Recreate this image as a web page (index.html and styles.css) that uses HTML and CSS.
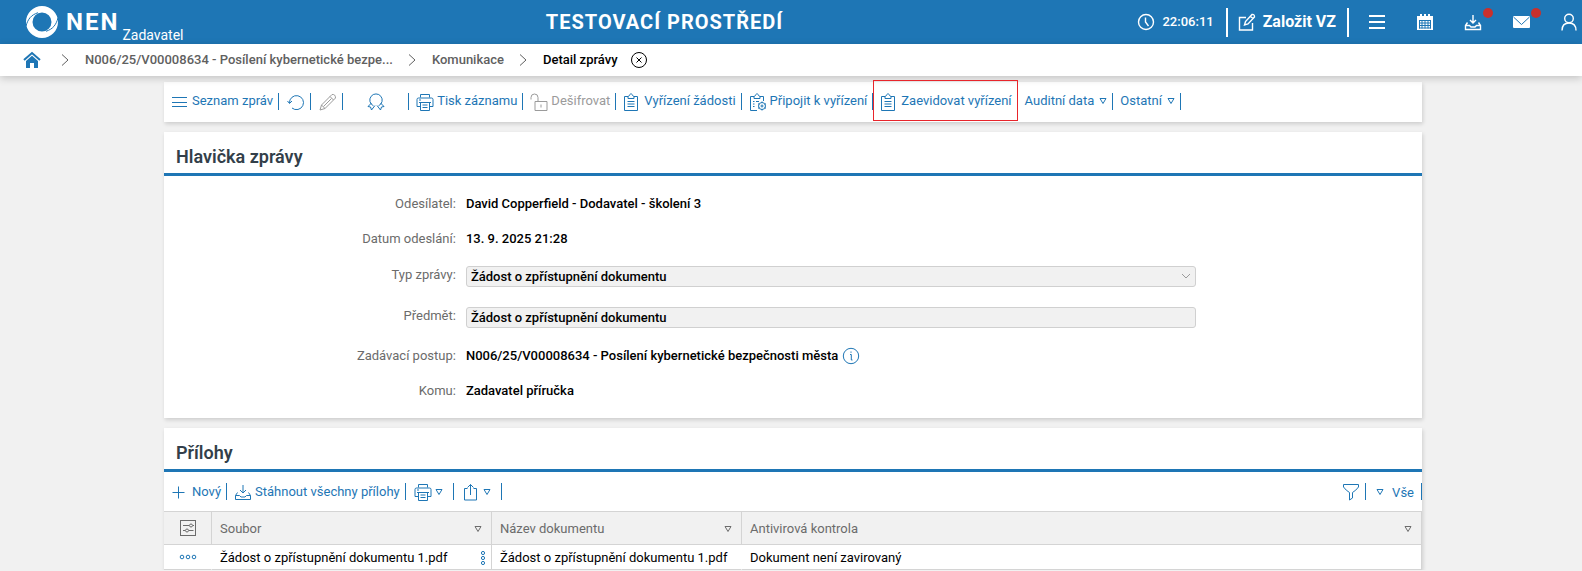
FILE: index.html
```html
<!DOCTYPE html>
<html lang="cs">
<head>
<meta charset="utf-8">
<title>NEN – Detail zprávy</title>
<link rel="stylesheet" href="styles.css">
</head>
<body>
<svg class="sprite" aria-hidden="true">
  <symbol id="clip" viewBox="0 0 18 18"><path d="M5 3.500H1.500V17.500H14.500V3.500H11M5 5.500V3.500L6.500 2.500C7 .2 9 .2 9.500 2.500L11 3.500V5.500ZM4.500 8.500H11.500M4.500 11H11.500M4.500 13.500H11.500"/></symbol>
  <symbol id="printer" viewBox="0 0 18 18"><path d="M4.500 4.500V1.500H13.500V4.500M4.500 13.500H1V6.500Q1 5 2.500 5H15.500Q17 5 17 6.500V13.500H13.500M4.500 9.500H13.500V17.500H4.500ZM3 9.500H15M6.500 12H11.500M6.500 14.500H11.500M3 7H5"/></symbol>
  <symbol id="tray" viewBox="0 0 18 18"><path d="M9 2V10M6 7L9 10L12 7M3.500 9.500L1.500 12.500V16.500H16.500V12.500L14.500 9.500M1.500 12.500H5.500L7 14H11L12.500 12.500H16.500"/></symbol>
  <symbol id="tri" viewBox="0 0 8 8"><path d="M1 1.500H7L4 6.500Z"/></symbol>
  <symbol id="chev" viewBox="0 0 8 14"><path d="M1 1.500L7 7L1 12.500"/></symbol>
</svg>

<header class="topbar">
  <a class="brand" href="#">
    <svg class="brand-mark" viewBox="0 0 32 32"><path fill-rule="evenodd" d="M16 0a16 16 0 1 0 0 32a16 16 0 1 0 0-32ZM16 6.500a9.500 9.500 0 1 1 0 19a9.500 9.500 0 1 1 0-19Z"/><path class="cut" d="M0 20C2 13 5 9 12 6.700M32 12C30 19 27 23 20 25.300"/></svg>
    <span class="brand-name">NEN</span>
    <span class="brand-role">Zadavatel</span>
  </a>
  <div class="env">TESTOVACÍ PROSTŘEDÍ</div>
  <div class="clock">
    <svg class="icon" viewBox="0 0 18 18"><circle cx="9" cy="9" r="7.500"/><path d="M8.500 4.500V9L11.500 13"/></svg>
    <time>22:06:11</time>
  </div>
  <button class="create" type="button">
    <svg class="icon" viewBox="0 0 18 18"><path d="M8 4.500H1.500V17H14.500V10M6.500 12L7.500 8.500L14 1.500Q16.500 1 16.500 4L10 11ZM12.500 3.500L15 5.500"/></svg>
    Založit VZ
  </button>
  <nav class="tools">
    <button type="button" aria-label="Menu"><svg class="icon burger" viewBox="0 0 18 18"><path d="M1 3H17M1 9H17M1 15H17"/></svg></button>
    <button type="button" aria-label="Kalendář"><svg class="icon" viewBox="0 0 18 18"><path class="solid" d="M1 3H4V1H6V3H8V1H10V3H12V1H14V3H17V17H1Z"/><path class="cut" d="M3 7.500H15M3 10H15M3 12.500H15M3 15H15M3.500 7V15.500M6 7V15.500M9 7V15.500M12 7V15.500M14.500 7V15.500"/></svg></button>
    <button type="button" aria-label="Stažené"><svg class="icon"><use href="#tray"/></svg><span class="dot"></span></button>
    <button type="button" aria-label="Zprávy"><svg class="icon" viewBox="0 0 18 18"><rect class="solid" x="1" y="3" width="17" height="12" rx="1"/><path class="cut" d="M1.500 4L9.500 11.500L17.500 4"/></svg><span class="dot"></span></button>
    <button type="button" aria-label="Uživatel"><svg class="icon" viewBox="0 0 18 18"><circle cx="9" cy="5.500" r="4.300"/><path d="M2 17.500C2 12.500 5 10 9 10S16 12.500 16 17.500"/></svg></button>
  </nav>
</header>

<nav class="crumbs" aria-label="Drobečková navigace">
  <a href="#" aria-label="Domů"><svg class="home" viewBox="0 0 18 18"><path class="roof" d="M1 9L9 2L17 9"/><path class="solid" d="M3 10L9 4.800L15 10V17H11V12H7V17H3Z"/></svg></a>
  <svg class="chev"><use href="#chev"/></svg>
  <a href="#">N006/25/V00008634 - Posílení kybernetické bezpe...</a>
  <svg class="chev"><use href="#chev"/></svg>
  <a href="#">Komunikace</a>
  <svg class="chev"><use href="#chev"/></svg>
  <span class="current">Detail zprávy</span>
  <button class="close" type="button" aria-label="Zavřít"><svg viewBox="0 0 18 18"><circle cx="9" cy="9" r="7.500"/><path d="M6.500 6.500L11.500 11.500M11.500 6.500L6.500 11.500"/></svg></button>
</nav>

<main class="page">
  <div class="card actions">
    <button type="button"><svg class="icon" viewBox="0 0 18 18"><path d="M1 4.500H16M1 9.500H16M1 13.500H16"/></svg>Seznam zpráv</button>
    <button class="single" type="button" aria-label="Obnovit"><svg class="icon" viewBox="0 0 18 18"><path d="M2.500 10A7 7 0 1 1 5 15M.5 8L2.500 10.500L5 8"/></svg></button>
    <button class="single" type="button" aria-label="Upravit" disabled><svg class="icon" viewBox="0 0 18 18"><path d="M1 17L2.500 12L13 1.500Q16.500 1 16.500 5L6 15.500ZM11 3.500L14.500 7M2.500 12L6 15.500M4.500 13.500L12.500 5.500"/></svg></button>
    <button class="wide" type="button" aria-label="Certifikát"><svg class="icon" viewBox="0 0 18 18"><path d="M6.500 12.800A6.200 6.200 0 1 1 11.500 12.800M4.500 10L1 13.500L3.500 14L4.500 17L8 12.500M13.500 10L17 13.500L14.500 14L13.500 17L10 12.500"/></svg></button>
    <button type="button"><svg class="icon"><use href="#printer"/></svg>Tisk záznamu</button>
    <button type="button" disabled><svg class="icon" viewBox="0 0 18 18"><path d="M1 6.500V4.500A3.500 3.500 0 0 1 8 4.500V8.500M5 8.500H17V17.500H5ZM11 11.500V14.500"/></svg>Dešifrovat</button>
    <button type="button"><svg class="icon"><use href="#clip"/></svg>Vyřízení žádosti</button>
    <button type="button"><svg class="icon" viewBox="0 0 18 18"><path d="M5 3.500H1.500V17.500H8M14.500 8V3.500H11M5 5.500V3.500L6.500 2.500C7 .2 9 .2 9.500 2.500L11 3.500V5.500ZM4 8.500H5.500M7 8.500H10M4 11H5.500M4 13.500H5.500"/><circle cx="13" cy="13" r="3.500"/><circle cx="13" cy="13" r="1"/><path d="M13 8.500V10M13 16V17.500M9 10.700L10.400 11.500M15.600 14.500L17 15.300M17 10.700L15.600 11.500M10.400 14.500L9 15.300"/></svg>Připojit k vyřízení</button>
    <button class="marked" type="button"><svg class="icon"><use href="#clip"/></svg>Zaevidovat vyřízení</button>
    <button type="button">Auditní data<svg class="tri"><use href="#tri"/></svg></button>
    <button type="button">Ostatní<svg class="tri"><use href="#tri"/></svg></button>
  </div>

  <section class="card">
    <h2>Hlavička zprávy</h2>
    <div class="form">
      <div class="row"><span class="label">Odesílatel:</span><span class="value">David Copperfield - Dodavatel - školení 3</span></div>
      <div class="row"><span class="label">Datum odeslání:</span><span class="value">13. 9. 2025 21:28</span></div>
      <div class="row field"><label class="label" for="typ">Typ zprávy:</label><div class="select"><select id="typ" disabled><option>Žádost o zpřístupnění dokumentu</option></select><svg viewBox="0 0 10 6"><path d="M1 1L5 5L9 1"/></svg></div></div>
      <div class="row field"><label class="label" for="predmet">Předmět:</label><input id="predmet" type="text" value="Žádost o zpřístupnění dokumentu" readonly></div>
      <div class="row"><span class="label">Zadávací postup:</span><span class="value">N006/25/V00008634 - Posílení kybernetické bezpečnosti města<button class="info" type="button" aria-label="Informace"><svg viewBox="0 0 18 18"><circle cx="9" cy="9" r="7.700"/><path d="M8 7.500H9.300V13H10.500M9 4.500V5.800"/></svg></button></span></div>
      <div class="row"><span class="label">Komu:</span><span class="value">Zadavatel příručka</span></div>
    </div>
  </section>

  <section class="card">
    <h2>Přílohy</h2>
    <div class="actions table-actions">
      <button type="button"><svg class="icon" viewBox="0 0 18 18"><path d="M1.500 9.500H13.500M7.500 3.500V15.500"/></svg>Nový</button>
      <button type="button"><svg class="icon"><use href="#tray"/></svg>Stáhnout všechny přílohy</button>
      <button class="menu" type="button" aria-label="Tisk"><svg class="icon"><use href="#printer"/></svg><svg class="tri"><use href="#tri"/></svg></button>
      <button class="menu" type="button" aria-label="Export"><svg class="icon" viewBox="0 0 18 18"><path d="M5.500 5.500H2.500V17H14.500V5.500H11.500M8.500 12V1.500M5.500 4.500L8.500 1.500L11.500 4.500"/></svg><svg class="tri"><use href="#tri"/></svg></button>
      <button class="single filter" type="button" aria-label="Filtr"><svg class="icon" viewBox="0 0 18 18"><path d="M1.500 1.500H16.500V4Q14 7.500 10.500 9.500V15L7.500 17V9.500Q4 7.500 1.500 4Z"/></svg></button>
      <button class="view" type="button"><svg class="tri"><use href="#tri"/></svg>Vše</button>
    </div>
    <table>
      <colgroup><col class="c-menu"><col class="c-file"><col class="c-name"><col></colgroup>
      <thead>
        <tr>
          <th><svg class="icon set" viewBox="0 0 18 18"><rect x="1.500" y="1.500" width="15" height="15"/><path d="M4 6.500H10M14 6.500H15M4 11.500H6M10 11.500H14.500"/><circle cx="12" cy="6.500" r="1.500"/><circle cx="8" cy="11.500" r="1.500"/></svg></th>
          <th><div class="cell">Soubor<svg class="tri"><use href="#tri"/></svg></div></th>
          <th><div class="cell">Název dokumentu<svg class="tri"><use href="#tri"/></svg></div></th>
          <th><div class="cell">Antivirová kontrola<svg class="tri"><use href="#tri"/></svg></div></th>
        </tr>
      </thead>
      <tbody>
        <tr>
          <td><svg class="dots" viewBox="0 0 18 6"><circle cx="3" cy="3" r="1.800"/><circle cx="9" cy="3" r="1.800"/><circle cx="15" cy="3" r="1.800"/></svg></td>
          <td><div class="cell">Žádost o zpřístupnění dokumentu 1.pdf<svg class="vdots" viewBox="0 0 6 16"><circle cx="3" cy="3" r="1.600"/><circle cx="3" cy="8" r="1.600"/><circle cx="3" cy="13" r="1.600"/></svg></div></td>
          <td><div class="cell">Žádost o zpřístupnění dokumentu 1.pdf</div></td>
          <td><div class="cell">Dokument není zavirovaný</div></td>
        </tr>
      </tbody>
    </table>
  </section>
</main>
</body>
</html>
```
FILE: styles.css
```css
* { box-sizing: border-box; }

body {
  margin: 0;
  background: #f1f1f1;
  color: #000;
  font: 13px/18px Roboto, "Liberation Sans", sans-serif;
}

button {
  margin: 0;
  padding: 0;
  border: 0;
  background: none;
  color: inherit;
  font: inherit;
}

a { color: inherit; text-decoration: none; }

svg { display: block; flex: none; fill: none; stroke: currentColor; }

.sprite { position: absolute; width: 0; height: 0; }
.icon { width: 18px; height: 18px; }
.tri { width: 8px; height: 8px; }
.solid { fill: currentColor; stroke: none; }

/* Top bar */
.topbar {
  display: flex;
  align-items: center;
  height: 44px;
  padding-left: 26px;
  background: #1e76b5;
  color: #fff;
}

.topbar .icon { stroke-width: 1.4; }
.topbar .burger { stroke-width: 2; }
.topbar .cut { fill: none; stroke: #1e76b5; stroke-width: 1; }

.brand { display: flex; align-items: center; height: 44px; }
.brand-mark { width: 32px; height: 32px; fill: #fff; stroke: none; }
.brand-name { margin-left: 8px; font-size: 24px; font-weight: 700; letter-spacing: 2px; }
.brand-role { align-self: flex-end; margin-left: 3px; font-size: 14px; }

.env {
  flex: 1;
  padding-left: 8px;
  text-align: center;
  font-size: 20px;
  font-weight: 700;
  letter-spacing: 1px;
}

.clock { display: flex; align-items: center; gap: 7px; padding-right: 12px; font-weight: 500; }

.create {
  display: flex;
  align-items: center;
  gap: 7px;
  height: 29px;
  padding: 0 11px 0 10px;
  border: solid #fff;
  border-width: 0 2px;
  font-size: 16px;
  font-weight: 700;
}

.tools { display: flex; margin-left: 4px; }
.tools button { position: relative; width: 48px; height: 44px; padding-left: 15px; }
.tools button:last-child { width: 37px; }

.dot {
  position: absolute;
  top: 8px;
  right: 4px;
  width: 10px;
  height: 10px;
  border-radius: 50%;
  background: #c9302c;
}

/* Breadcrumbs */
.crumbs {
  position: relative;
  display: flex;
  align-items: center;
  height: 32px;
  padding-left: 23px;
  background: #fff;
  box-shadow: 0 2px 8px rgba(0, 0, 0, .2);
  color: #606060;
  font-weight: 500;
}

.home { width: 18px; height: 18px; margin-right: 5px; color: #1e76b5; }
.roof { stroke-width: 2; }
.chev { width: 8px; height: 14px; margin: 0 16px 0 15px; }
.current { color: #000; }
.close { margin-left: 12px; color: #000; }
.close svg { width: 18px; height: 18px; }

/* Cards */
.page {
  display: flex;
  flex-direction: column;
  gap: 10px;
  padding: 6px 160px 0 164px;
}

.card { background: #fff; box-shadow: 1px 2px 4px rgba(0, 0, 0, .15); }

h2 {
  margin: 0;
  padding: 16px 12px 7px;
  border-bottom: 3px solid #1e76b5;
  color: #333f4a;
  font-size: 18px;
  line-height: 18px;
  font-weight: 600;
}

.actions {
  display: flex;
  align-items: center;
  height: 40px;
  padding-bottom: 1px;
  color: #1e76b5;
}

.actions button {
  display: flex;
  align-items: flex-start;
  gap: 3px;
  height: 17px;
  padding: 0 5px 0 7px;
  border-right: 1px solid #1e76b5;
  line-height: 15px;
  white-space: nowrap;
}

.actions button:disabled { color: #9b9b9b; border-color: #1e76b5; }
.actions .single { padding: 0 5px 0 8px; }
.actions .wide { padding: 0 23px 0 24px; }
.actions .tri { margin: 4px 0 0 2px; }

.actions .marked { position: relative; border-right-color: transparent; }

.marked::after {
  content: "";
  position: absolute;
  inset: -13px -1px -11px 0;
  border: 1px solid #e8252b;
}

/* Message form */
.form { padding: 10px 0; }

.row {
  display: grid;
  grid-template-columns: 24% 58%;
  padding: 8px 0 7px;
  line-height: 20px;
}

.row.field { padding: 10px 0; line-height: 18px; }
.label { padding-right: 10px; text-align: right; color: #6b6b6b; }
.value { display: flex; align-items: center; font-weight: 500; }

.select { position: relative; }

.select svg {
  position: absolute;
  top: 7px;
  right: 5px;
  width: 10px;
  height: 6px;
  color: #9b9b9b;
}

select, input {
  display: block;
  appearance: none;
  width: 100%;
  height: 21px;
  margin: 0;
  padding: 0 4px;
  border: 1px solid #d0d0d0;
  border-radius: 3px;
  background: #f1f1f1;
  color: #000;
  font: inherit;
  font-weight: 500;
}

select:disabled { color: #000; opacity: 1; }

.info { margin-left: 4px; color: #1e76b5; }
.info svg { width: 18px; height: 18px; }

/* Attachments */
.table-actions { height: 39px; padding-bottom: 0; }
.table-actions button { line-height: 17px; }
.table-actions .menu { padding: 0 10px 0 8px; }
.table-actions .tri { margin: 5px 0 0; }
.table-actions .filter { margin-left: auto; }
.table-actions .view { gap: 8px; padding: 0 7px 0 10px; line-height: 20px; }

table { width: 100%; border-collapse: separate; border-spacing: 0; table-layout: fixed; }
.c-menu { width: 48px; }
.c-file { width: 280px; }
.c-name { width: 250px; }

th, td {
  padding: 0 8px;
  border-right: 1px solid #d4d4d4;
  border-bottom: 1px solid #d4d4d4;
  text-align: left;
}

th {
  height: 34px;
  border-top: 1px solid #d4d4d4;
  background: #f1f1f1;
  color: #6b6b6b;
  font-weight: 400;
}

td { height: 25px; }
tbody td:not(:last-child):not(:nth-child(2)) { border-right-color: transparent; }
.cell { display: flex; align-items: center; justify-content: space-between; padding-top: 2px; line-height: 18px; }
.cell .tri { margin-right: 1px; }
.set { margin: 0 auto; }
.dots { width: 18px; height: 6px; margin: 0 auto; color: #1e76b5; }
.vdots { width: 6px; height: 16px; margin-right: -3px; color: #1e76b5; }
```
